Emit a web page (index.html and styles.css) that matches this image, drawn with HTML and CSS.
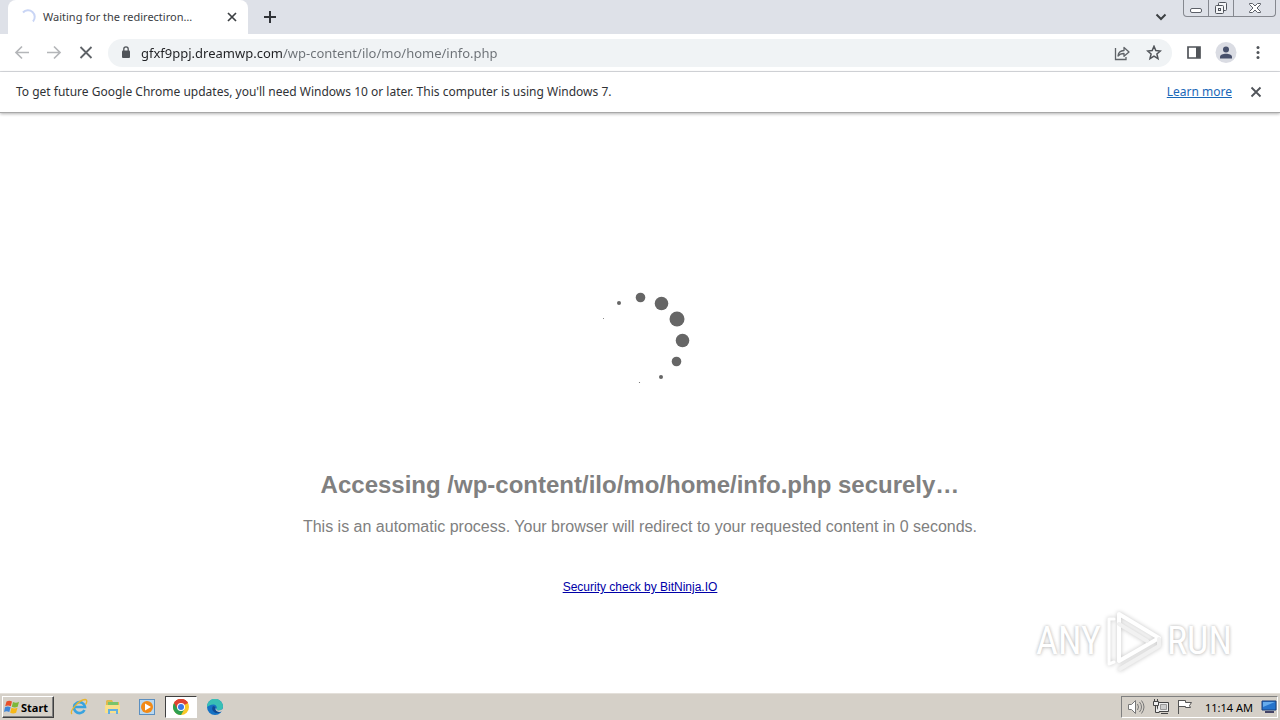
FILE: index.html
```html
<!DOCTYPE html>
<html lang="en">

<head>
    <meta charset="UTF-8">
    <meta name="viewport" content="width=device-width, initial-scale=1.0">
    <title>Waiting for the redirectiron...</title>
    <link rel="stylesheet" href="styles.css">
</head>

<body>
    <!-- Tab strip -->
    <header class="tab-strip">
        <div class="tab">
            <svg class="tab-spinner" width="16" height="16" viewBox="0 0 16 16" fill="none">
                <path d="M3 3.500A6.500 6.500 0 0 1 13 12.500" stroke="#c9d5f5" stroke-width="2" />
            </svg>
            <span class="tab-title">Waiting for the redirectiron…</span>
            <button class="icon-btn tab-close" aria-label="Close tab">
                <svg width="10" height="10" viewBox="0 0 10 10"><path d="M1 1l8 8M9 1L1 9" stroke="#3c4043" stroke-width="1.700" /></svg>
            </button>
        </div>
        <button class="icon-btn new-tab" aria-label="New tab">
            <svg width="12" height="12" viewBox="0 0 12 12"><path d="M6 0v12M0 6h12" stroke="#303338" stroke-width="2" /></svg>
        </button>
        <button class="icon-btn tab-search" aria-label="Search tabs">
            <svg width="12" height="8" viewBox="0 0 12 8" fill="none"><path d="M1.500 1.500L6 6l4.500-4.500" stroke="#3c4043" stroke-width="2" /></svg>
        </button>
        <div class="window-controls">
            <button class="minimize" aria-label="Minimize">
                <svg width="14" height="16" viewBox="0 0 14 16"><rect x="1.500" y="8.500" width="11" height="4" rx="1.500" fill="#fff" stroke="#5c6068" /></svg>
            </button>
            <button class="restore" aria-label="Restore">
                <svg width="14" height="16" viewBox="0 0 14 16" fill="#f4f5f7" stroke="#50545c">
                    <rect x="4.500" y="2.500" width="8" height="8" rx="1" />
                    <rect x="1.500" y="5.500" width="8" height="8" rx="1" />
                    <rect x="4.500" y="8.500" width="2" height="2" />
                </svg>
            </button>
            <button class="close" aria-label="Close">
                <svg width="14" height="16" viewBox="0 0 14 16"><path d="M1.500 3.500h3L7 6l2.500-2.500h3v1L9 8l3.500 3.500v1h-3L7 10l-2.500 2.500h-3v-1L5 8 1.500 4.500z" fill="#fff" stroke="#5c6068" /></svg>
            </button>
        </div>
    </header>

    <!-- Toolbar -->
    <nav class="toolbar">
        <button class="icon-btn" aria-label="Back">
            <svg width="16" height="16" viewBox="0 0 16 16" fill="none" stroke="#b4b6b9" stroke-width="1.700"><path d="M15 7.500H2M8 1.500l-6 6 6 6" /></svg>
        </button>
        <button class="icon-btn" aria-label="Forward">
            <svg width="16" height="16" viewBox="0 0 16 16" fill="none" stroke="#b4b6b9" stroke-width="1.700"><path d="M1 7.500h13M8 1.500l6 6-6 6" /></svg>
        </button>
        <button class="icon-btn" aria-label="Stop loading">
            <svg width="14" height="14" viewBox="0 0 14 14"><path d="M1.500 1l11 11M12.500 1l-11 11" stroke="#5f6368" stroke-width="1.800" /></svg>
        </button>
        <div class="omnibox">
            <svg class="lock" width="10" height="14" viewBox="0 0 10 14">
                <rect x="1" y="4.500" width="8" height="7.500" rx="1" fill="#505459" />
                <path d="M2.800 6V3a2.200 2.200 0 0 1 4.400 0V6" fill="none" stroke="#505459" stroke-width="1.300" />
            </svg>
            <input class="url" type="text" aria-label="Address" value="gfxf9ppj.dreamwp.com/wp-content/ilo/mo/home/info.php">
            <button class="icon-btn" aria-label="Share">
                <svg width="16" height="16" viewBox="0 0 16 16" fill="none" stroke="#5f6368" stroke-width="1.300">
                    <path d="M1.500 3v11.500H12V12" />
                    <path d="M4 11c.3-3.500 2.500-5.300 6-5.500V2.500L15 7l-5 4.300V8.500C7.500 8.500 5.500 9 4 11z" stroke-linejoin="round" />
                </svg>
            </button>
            <button class="icon-btn" aria-label="Bookmark this tab">
                <svg width="16" height="16" viewBox="0 0 16 16" fill="none" stroke="#505459" stroke-width="1.500"><path d="M8 1.300l1.800 4.300 4.600.4-3.500 3 1.100 4.600L8 11.200l-4 2.400 1.100-4.600-3.500-3 4.600-.4z" /></svg>
            </button>
        </div>
        <button class="icon-btn" aria-label="Side panel">
            <svg width="14" height="14" viewBox="0 0 14 14"><path d="M1 1h12v11H1z" fill="none" stroke="#505459" stroke-width="1.700" /><path d="M9 1h4v11H9z" fill="#505459" /></svg>
        </button>
        <button class="icon-btn" aria-label="Profile">
            <svg width="22" height="22" viewBox="0 0 22 22"><circle cx="11" cy="10.500" r="10.500" fill="#dadce3" /><circle cx="11" cy="7.500" r="3" fill="#47506b" /><path d="M5 16.500V15C5 13 8 11.800 11 11.800s6 1.200 6 3.200v1.500z" fill="#47506b" /></svg>
        </button>
        <button class="icon-btn" aria-label="Menu">
            <svg width="4" height="14" viewBox="0 0 4 14" fill="#505459"><circle cx="2" cy="1.500" r="1.500" /><circle cx="2" cy="6.500" r="1.500" /><circle cx="2" cy="11.500" r="1.500" /></svg>
        </button>
    </nav>

    <!-- Update notice -->
    <div class="infobar">
        <span class="infobar-text">To get future Google Chrome updates, you'll need Windows 10 or later. This computer is using Windows 7.</span>
        <a class="learn-more" href="#">Learn more</a>
        <button class="icon-btn" aria-label="Dismiss">
            <svg width="12" height="12" viewBox="0 0 12 12"><path d="M1.500 1.500l9 9M10.500 1.500l-9 9" stroke="#505459" stroke-width="1.800" /></svg>
        </button>
    </div>

    <main class="page">
        <svg class="loader" width="100" height="100" viewBox="0 0 100 100" fill="#666">
            <circle cx="13.500" cy="28.500" r=".5" />
            <circle cx="29" cy="13" r="2" />
            <circle cx="50.500" cy="7.500" r="4.800" />
            <circle cx="71.500" cy="13.500" r="6.800" />
            <circle cx="87" cy="29" r="7.500" />
            <circle cx="92.500" cy="50.500" r="6.800" />
            <circle cx="86.500" cy="71.500" r="4.800" />
            <circle cx="71" cy="87" r="2" />
            <circle cx="49.500" cy="92.500" r=".6" />
        </svg>
        <h1>Accessing /wp-content/ilo/mo/home/info.php securely…</h1>
        <p>This is an automatic process. Your browser will redirect to your requested content in 0 seconds.</p>
        <a class="check-link" href="#">Security check by BitNinja.IO</a>

        <div class="watermark">
            <span>ANY</span>
            <svg class="play" width="58" height="64" viewBox="0 0 58 64" fill="none" stroke-linejoin="round" stroke-linecap="round">
                <path d="M9 10H4v45l5-2" stroke="#fff" stroke-width="3" />
                <path d="M14 5l40 24-40 23z" stroke="#fff" stroke-width="4" />
                <path d="M15 60l39-23v-7M14 15l28 17" stroke="#f1f1f1" stroke-width="4" />
            </svg>
            <span>RUN</span>
        </div>
    </main>

    <footer class="taskbar">
        <button class="start">
            <svg width="16" height="16" viewBox="0 0 16 16">
                <path d="M2.500 2.500C4.500 1.300 6.300 1.500 8 2.500L6.800 7.300C5 6.300 3.200 6.300 1.200 7.200z" fill="#e8502a" />
                <path d="M9 3c2 1 4 1 6-.2l-1.300 4.900c-2 1.100-4 1-5.900 0z" fill="#7db83a" />
                <path d="M1 8.200c2-1 3.800-.9 5.600.1l-1.300 4.800c-1.800-1-3.600-1-5.300-.1z" fill="#3f86d8" />
                <path d="M7.500 8.800c2 1 4 1 6 0l-1.400 4.900c-2 1-4 1-5.900 0z" fill="#f7b818" />
            </svg>
            Start
        </button>
        <div class="quick-launch">
            <button class="task" aria-label="Internet Explorer">
                <svg width="18" height="18" viewBox="0 0 18 18" fill="none">
                    <path d="M14.500 12A5.500 5.500 0 1 1 15 9H5" stroke="#38a3df" stroke-width="2.600" />
                    <path d="M2 16C-1 13 9 2 15 1.500c3 0 1.500 4 .5 5" stroke="#e9b52c" stroke-width="1.300" />
                </svg>
            </button>
            <button class="task" aria-label="Explorer">
                <svg width="18" height="18" viewBox="0 0 18 18">
                    <path d="M2 3l1-1h5l1 2h6v11H2z" fill="#dfb94e" />
                    <path d="M4 4h10v3H4z" fill="#79c46a" />
                    <path d="M1 7h15v8H1z" fill="#f9e08a" />
                    <path d="M4 16v-5h10v5h-2v-3H6v3z" fill="#63afe0" />
                </svg>
            </button>
            <button class="task" aria-label="Media Player">
                <svg width="16" height="16" viewBox="0 0 16 16">
                    <rect x=".5" y=".5" width="15" height="15" fill="#b9d8f0" stroke="#5b8fc0" />
                    <circle cx="8" cy="8" r="6" fill="#f28a16" /><path d="M6 4.500l6 3.500-6 3.500z" fill="#fff" />
                </svg>
            </button>
            <button class="task active" aria-label="Chrome">
                <svg width="16" height="16" viewBox="0 0 16 16">
                    <circle cx="8" cy="8" r="8" fill="#f9c828" />
                    <path d="M8 8L1.070 4A8 8 0 0 1 14.930 4z" fill="#df4333" />
                    <path d="M8 8L1.070 4A8 8 0 0 0 8 16l3.500-6z" fill="#2e9f50" />
                    <path d="M8 4h6.930a8 8 0 0 0-13.860 0L4.500 10z" fill="#df4333" />
                    <circle cx="8" cy="8" r="4" fill="#fff" /><circle cx="8" cy="8" r="3" fill="#3a78e7" />
                </svg>
            </button>
            <button class="task" aria-label="Edge">
                <svg width="16" height="16" viewBox="0 0 16 16">
                    <circle cx="8" cy="8" r="8" fill="#1672c4" />
                    <path d="M0 8a8 8 0 0 1 16-.5c0 2.500-2 4-4.500 4-2 0-2.500-1-2-1.800C10.500 8 9 5.500 6.500 5.500 3.500 5.500 1 7 0 8z" fill="#38c0b5" />
                    <path d="M6 7c-2 3 0 6.500 3.500 7 2 .2 3.700-.4 5-1.700C12 13.500 8 12 8 9.500c0-1 .5-1.500.5-1.500z" fill="#114a93" />
                    <path d="M9.500 9.800C9 10.500 9.600 11.500 11.500 11.500c2 0 3.500-.8 4.200-2L16 12l-3 1c-3 0-4.500-1.500-4.500-3.500z" fill="#d5d0c8" />
                </svg>
            </button>
        </div>
        <div class="tray">
            <svg width="18" height="16" viewBox="0 0 18 16" fill="none" stroke="#777">
                <path d="M1.500 5.500h3l4-4v13l-4-4h-3z" fill="#fff" /><path d="M10.500 5q2 3 0 6M12.500 3q4 5 0 10M14.500 1.500q5 6.500 0 13" />
            </svg>
            <svg width="16" height="16" viewBox="0 0 16 16" fill="#eee" stroke="#444">
                <path d="M4.500 3.500h11v9h-11zM8 14.500h7" /><path d="M.5 2.500h5v4h-5zM1.500 0v2M4.500 0v2M2.500 6.500v7h4" />
                <path d="M7.500 5.500h6v5h-6z" fill="#ccc" stroke="#999" />
            </svg>
            <svg width="16" height="16" viewBox="0 0 16 16" fill="#fff" stroke="#555">
                <path d="M1.500 1v14M1.500 1.500h7v2h6l-2 3 1 2h-5v-1h-7z" />
            </svg>
            <time class="clock">11:14 AM</time>
            <svg width="16" height="14" viewBox="0 0 16 14">
                <path d="M1 1h14v9H1z" fill="#2674cc" stroke="#183f7c" /><path d="M2 2h12L2 7z" fill="#66aced" /><path d="M4 12h9" stroke="#446" stroke-width="2" />
            </svg>
        </div>
    </footer>
</body>

</html>
```
FILE: styles.css
```css
* {
    box-sizing: border-box;
}

body {
    margin: 0;
    min-height: 100vh;
    display: flex;
    flex-direction: column;
    background: #fff;
    font-family: "Noto Sans", sans-serif;
}

button {
    font-family: inherit;
    padding: 0;
    border: 0;
    background: none;
}

svg {
    display: block;
    flex: none;
}

.icon-btn {
    width: 24px;
    height: 24px;
    flex: none;
    display: flex;
    align-items: center;
    justify-content: center;
}

/* Tab strip */
.tab-strip {
    height: 34px;
    display: flex;
    align-items: center;
    background: #dee1e8;
    padding: 0 4px 0 8px;
}

.tab {
    width: 240px;
    height: 34px;
    display: flex;
    align-items: center;
    padding: 0 4px 0 12px;
    background: #fff;
    border-radius: 8px 8px 0 0;
}

.tab-title {
    flex: 1;
    margin-left: 7px;
    padding-bottom: 1px;
    font-size: 11px;
    color: #3c4043;
    white-space: nowrap;
}

.new-tab {
    margin-left: 10px;
}

.tab-search {
    margin-left: auto;
}

.window-controls {
    display: flex;
    align-self: flex-start;
    height: 17px;
    margin-left: 10px;
    border: 1px solid #85888f;
    border-top: 0;
    border-radius: 0 0 4px 4px;
}

.window-controls button {
    width: 25px;
    display: flex;
    justify-content: center;
    border-right: 1px solid #85888f;
}

.window-controls .close {
    width: 41px;
    border-right: 0;
}

/* Toolbar */
.toolbar {
    height: 38px;
    display: flex;
    align-items: center;
    gap: 8px;
    padding: 0 10px;
    background: #fff;
    border-bottom: 1px solid #dadce0;
}

.omnibox {
    flex: 1;
    height: 28px;
    display: flex;
    align-items: center;
    gap: 8px;
    margin: 0 2px;
    padding: 0 6px 0 13px;
    background: #f0f3f5;
    border-radius: 14px;
}

/* host name dark, path grey */
.url {
    flex: 1;
    min-width: 0;
    padding: 0 2px;
    border: 0;
    outline: 0;
    font-family: inherit;
    font-size: 13px;
    color: #202124;
    background: linear-gradient(90deg, #202124 144px, #6b7075 144px);
    -webkit-background-clip: text;
    background-clip: text;
    -webkit-text-fill-color: transparent;
}

/* Infobar */
.infobar {
    height: 41px;
    display: flex;
    align-items: center;
    gap: 12px;
    padding: 0 12px 0 16px;
    font-size: 12px;
    line-height: 16px;
    color: #303236;
    border-bottom: 1px solid #a8a8a8;
    box-shadow: 0 1px 3px rgba(0, 0, 0, 0.3);
}

.infobar-text {
    flex: 1;
}

.learn-more {
    color: #1a68b8;
}

/* Page */
.page {
    position: relative;
    flex: 1;
    display: flex;
    flex-direction: column;
    align-items: center;
    padding-top: 177px;
    font-family: "Liberation Sans", Arial, sans-serif;
    text-align: center;
    color: #808080;
}

.page h1 {
    margin: 81px 0 0;
    font-size: 24px;
    line-height: 28px;
}

.page p {
    margin: 18px 0 0;
    font-size: 16px;
    line-height: 20px;
}

.check-link {
    margin-top: 42px;
    font-size: 12px;
    line-height: 16px;
    color: #0000a8;
}

.watermark {
    position: absolute;
    right: 48px;
    bottom: 20px;
    display: flex;
    align-items: center;
    gap: 4px;
    font-family: "Roboto Condensed", Roboto, sans-serif;
    font-size: 38px;
    color: #fff;
    text-shadow: 0 0 3px #b8b8b8, 0 1px 4px #ddd;
}

.play {
    filter: drop-shadow(0 0 2px #c4c4c4);
}

/* Taskbar */
.taskbar {
    height: 27px;
    display: flex;
    align-items: center;
    padding: 0 2px;
    background: #d5d0c8;
    border-top: 1px solid #e4e0da;
}

.start {
    width: 52px;
    height: 22px;
    display: flex;
    align-items: center;
    gap: 1px;
    padding-left: 1px;
    font-size: 11px;
    font-weight: bold;
    color: #000;
    border: 1px solid;
    border-color: #fff #404040 #404040 #fff;
    box-shadow: inset -1px -1px #808080;
}

.quick-launch {
    display: flex;
    gap: 2px;
    margin-left: 9px;
}

.task {
    width: 32px;
    height: 22px;
    display: flex;
    align-items: center;
    justify-content: center;
}

.task.active {
    background: #fff;
    border: 1px solid;
    border-color: #404040 #fff #fff #404040;
}

.tray {
    height: 22px;
    display: flex;
    align-items: center;
    gap: 8px;
    margin-left: auto;
    padding: 0 0 0 5px;
    border: 1px solid;
    border-color: #808080 #fff #fff #808080;
}

.clock {
    margin-left: 4px;
    font-size: 11px;
    color: #000;
}
```
